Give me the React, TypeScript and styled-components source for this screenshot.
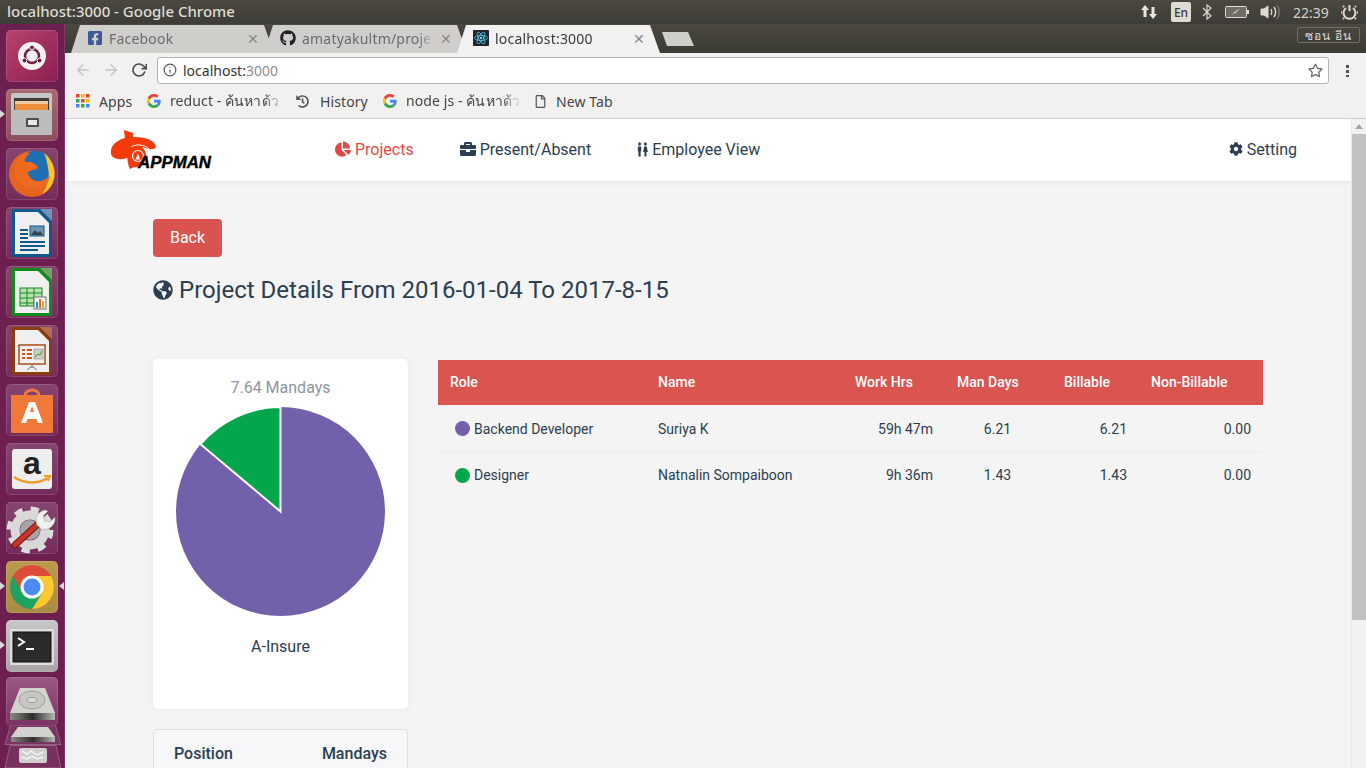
import React from 'react';
import styled, { createGlobalStyle } from 'styled-components';
import { FaBriefcase, FaChartPie, FaCog, FaFacebookSquare, FaGithub, FaGlobeAmericas, FaRegStar, FaRegFile, FaHistory } from 'react-icons/fa';
import { FiArrowLeft, FiArrowRight, FiRotateCw, FiInfo } from 'react-icons/fi';

const GlobalStyle = createGlobalStyle`
  html, body { margin: 0; padding: 0; height: 768px; overflow: hidden; background: #3c3b37; }
  * { box-sizing: border-box; }
`;

const Desktop = styled.div`
  width: 1366px;
  height: 768px;
  display: flex;
  flex-direction: column;
  overflow: hidden;
  font-family: Roboto, sans-serif;
`;

const TopBar = styled.div`
  height: 24px;
  flex: none;
  display: flex;
  align-items: center;
  justify-content: space-between;
  padding: 0 8px 2px 7px;
  background: linear-gradient(#4a4840, #3d3c36);
  color: #dfdbd2;
  font: 500 15px 'Noto Sans', sans-serif;
`;

const Indicators = styled.div`
  display: flex;
  align-items: center;
  margin-bottom: -2px;
`;

const Indicator = styled.div<{ $w: number }>`
  width: ${p => p.$w}px;
  display: flex;
  justify-content: center;
`;

const LangBox = styled.div`
  width: 20px;
  height: 20px;
  margin: 0 8px 0 11px;
  border-radius: 2px;
  background: #dfdbd2;
  color: #3c3b37;
  font: 500 12px 'Noto Sans', sans-serif;
  display: flex;
  align-items: center;
  justify-content: center;
`;

const Clock = styled.div`
  width: 58px;
  text-align: center;
  font: 400 14px 'Noto Sans', sans-serif;
  color: #d5d2c8;
`;

const Body = styled.div`
  flex: 1;
  display: flex;
  min-height: 0;
`;

const Launcher = styled.div`
  width: 65px;
  flex: none;
  display: flex;
  flex-direction: column;
  gap: 7px;
  padding: 6px 0 0 6px;
  background: #6d1f50;
  border-right: 1px solid #7e3a65;
  overflow: hidden;
  position: relative;
`;

const Tile = styled.div<{ $bg?: string; $short?: boolean }>`
  width: 52px;
  height: ${p => (p.$short ? 49 : 52)}px;
  margin-top: ${p => (p.$short ? -2 : 0)}px;
  flex: none;
  position: relative;
  border-radius: 5px;
  background: ${p => p.$bg || 'linear-gradient(#85456f, #752c5c)'};
  box-shadow: inset 0 0 0 1px rgba(255, 255, 255, 0.12);

  svg { display: block; }
`;

const Pip = styled.span<{ $side?: 'left' | 'right' }>`
  position: absolute;
  top: 21px;
  ${p => (p.$side === 'right' ? 'right: -6px;' : 'left: -6px;')}
  width: 0;
  height: 0;
  border-top: 4px solid transparent;
  border-bottom: 4px solid transparent;
  ${p => (p.$side === 'right' ? 'border-right: 5px solid #d8d8d8;' : 'border-left: 5px solid #d8d8d8;')}
`;

const FoldedTile = styled.svg<{ $mt: number }>`
  display: block;
  flex: none;
  margin: ${p => p.$mt}px 0 0 -2px;
`;

const Browser = styled.div`
  flex: 1;
  min-width: 0;
  display: flex;
  flex-direction: column;
`;

const TabStrip = styled.div`
  height: 29px;
  flex: none;
  display: flex;
  align-items: flex-end;
  padding-left: 6px;
  background: linear-gradient(#4a4840, #3b3a33);
  position: relative;
`;

const Tab = styled.div<{ $active?: boolean }>`
  width: 203px;
  height: 28px;
  margin-right: -10px;
  padding: 0 15px 2px 16px;
  flex: none;
  display: flex;
  align-items: center;
  gap: 6px;
  clip-path: polygon(0 100%, 9px 0, calc(100% - 10px) 0, 100% 100%);
  background: ${p => (p.$active ? '#f2f1f0' : '#cfcecb')};
  color: ${p => (p.$active ? '#3a3a3a' : '#6b6b6b')};
  font: 400 14px 'Noto Sans', sans-serif;
  letter-spacing: 0.2px;
  position: relative;
  z-index: ${p => (p.$active ? 2 : 1)};
`;

const TabTitle = styled.span`
  flex: 1;
  overflow: hidden;
  white-space: nowrap;
  -webkit-mask-image: linear-gradient(to right, #000 88%, transparent);
`;

const TabClose = styled.span`
  color: #8a8a8a;
  font-size: 14px;
`;

const NewTab = styled.div`
  width: 32px;
  height: 14px;
  margin: 0 0 7px 12px;
  background: #cfcecb;
  clip-path: polygon(0 0, 26px 0, 100% 100%, 5px 100%);
`;

const HideButton = styled.div`
  position: absolute;
  right: 6px;
  top: 3px;
  width: 63px;
  height: 16px;
  border: 1px solid #706e66;
  border-radius: 2px;
  color: #dfdbd2;
  font: 400 12px 'Noto Sans', sans-serif;
  letter-spacing: 1px;
  display: flex;
  align-items: center;
  justify-content: center;
`;

const Toolbar = styled.div`
  height: 34px;
  flex: none;
  display: flex;
  align-items: center;
  background: #f2f1f0;
  padding: 0 0 0 9px;
  gap: 10px;
`;

const NavButton = styled.span<{ $dim?: boolean }>`
  width: 18px;
  display: flex;
  justify-content: center;
  color: ${p => (p.$dim ? '#c4c4c4' : '#4a4a4a')};
`;

const Omnibox = styled.div`
  width: 1172px;
  height: 27px;
  margin-left: -1px;
  padding: 0 5px 0 5px;
  display: flex;
  align-items: center;
  gap: 6px;
  background: #fff;
  border: 1px solid #b4b4b2;
  border-radius: 3px;
  font: 400 14px 'Noto Sans', sans-serif;
  color: #333;
`;

const Port = styled.span`
  color: #8e8e8e;
  margin-left: -6px;
  flex: 1;
`;

const MenuDots = styled.div`
  width: 3px;
  height: 13px;
  margin-left: 7px;
  background: radial-gradient(circle at center, #555 1.5px, transparent 2px) 0 0 / 3px 5px repeat-y;
`;

const BookmarkBar = styled.div`
  height: 32px;
  flex: none;
  display: flex;
  align-items: center;
  padding: 0 0 3px 11px;
  background: #f2f1f0;
  border-bottom: 1px solid #d0d0ce;
  font: 400 14px 'Noto Sans', sans-serif;
  letter-spacing: 0.1px;
  color: #444;
`;

const Bookmark = styled.div<{ $w: number; $gap?: number; $fade?: boolean }>`
  width: ${p => p.$w}px;
  flex: none;
  display: flex;
  align-items: center;
  gap: ${p => p.$gap || 9}px;
  white-space: nowrap;
  overflow: hidden;
  ${p => (p.$fade ? '-webkit-mask-image: linear-gradient(to right, #000 78%, transparent 92%);' : '')}
`;

const Viewport = styled.div`
  flex: 1;
  min-height: 0;
  display: flex;
`;

const Page = styled.div`
  flex: 1;
  min-width: 0;
  background: #f4f4f4;
  color: #2c3e50;
  overflow: hidden;
`;

const NavBar = styled.div`
  height: 62px;
  display: flex;
  align-items: center;
  background: #fff;
  box-shadow: 0 1px 6px rgba(0, 0, 0, 0.07);
  padding: 0 54px 0 46px;
  font-size: 16px;
`;

const Menu = styled.div`
  display: flex;
  gap: 46px;
  margin-left: 122px;
  flex: 1;
`;

const MenuItem = styled.div<{ $active?: boolean }>`
  display: flex;
  align-items: center;
  gap: 4px;
  padding-bottom: 2px;
  color: ${p => (p.$active ? '#e04a46' : '#2c3e50')};
`;

const Content = styled.div`
  padding: 38px 88px 0 88px;
`;

const BackButton = styled.button`
  width: 69px;
  height: 38px;
  display: block;
  padding: 0 0 2px;
  border: none;
  border-radius: 4px;
  background: #d9534f;
  color: #fff;
  font: 400 16px Roboto, sans-serif;
`;

const Heading = styled.h2`
  margin: 18px 0 0;
  display: flex;
  align-items: center;
  gap: 6px;
  height: 30px;
  font: 400 24px Roboto, sans-serif;
  color: #2c3e50;
`;

const Columns = styled.div`
  margin-top: 54px;
  display: flex;
  gap: 30px;
  align-items: flex-start;
`;

const SideColumn = styled.div`
  width: 255px;
  flex: none;
  display: flex;
  flex-direction: column;
  gap: 20px;
`;

const ChartCard = styled.div`
  height: 350px;
  padding-top: 19px;
  background: #fff;
  border-radius: 5px;
  box-shadow: 0 0 8px rgba(0, 0, 0, 0.05);
  display: flex;
  flex-direction: column;
  align-items: center;
`;

const ChartTitle = styled.div`
  height: 19px;
  font-size: 16px;
  line-height: 19px;
  color: #8d96a0;
`;

const Pie = styled.svg`
  display: block;
  margin-top: 10px;
`;

const ChartLabel = styled.div`
  margin-top: 21px;
  font-size: 16px;
  line-height: 19px;
  color: #2c3e50;
`;

const PositionCard = styled.div`
  height: 120px;
  padding: 14px 20px 0 20px;
  display: flex;
  justify-content: space-between;
  background: #f7f7fa;
  border: 1px solid #dfe0e4;
  border-radius: 4px;
  font-size: 16px;
  font-weight: 500;
  line-height: 19px;
  color: #2c3e50;
`;

const DetailTable = styled.table`
  width: 825px;
  margin-top: 1px;
  table-layout: fixed;
  border-collapse: collapse;
  font-size: 14px;
`;

const HeadRow = styled.tr`
  height: 45px;
  background: #da5450;
  color: #fff;
`;

const Th = styled.th`
  padding: 0 12px 2px;
  text-align: left;
  font-weight: 500;
`;

const Row = styled.tr`
  height: 47px;
  border-bottom: 1px solid #ececec;

  &:last-child {
    height: 45px;
    border-bottom: none;
  }
`;

const Td = styled.td<{ $align?: string }>`
  padding: 1px ${p => (p.$align === 'center' ? '14px' : '12px')} 0 12px;
  text-align: ${p => p.$align || 'left'};
  color: #2c3e50;
`;

const RoleCell = styled.div`
  display: flex;
  align-items: center;
  gap: 4px;
  padding-left: 5px;
`;

const Dot = styled.span<{ $color: string }>`
  width: 15px;
  height: 15px;
  border-radius: 50%;
  background: ${p => p.$color};
`;

const ScrollBar = styled.div`
  width: 15px;
  flex: none;
  display: flex;
  flex-direction: column;
  align-items: center;
  background: #f1f1f1;
  border-left: 1px solid #e8e8e8;
`;

const ScrollArrow = styled.span`
  margin-top: 5px;
  width: 0;
  height: 0;
  border-left: 4px solid transparent;
  border-right: 4px solid transparent;
  border-bottom: 5px solid #a3a3a3;
`;

const ScrollThumb = styled.div`
  width: 100%;
  height: 486px;
  margin-top: 5px;
  background: #c1c1c1;
`;

const GoogleG = () => (
  <svg width="14" height="14" viewBox="0 0 48 48">
    <path fill="#ea4335" d="M24 9.5c3.5 0 6.7 1.3 9.1 3.5l6.8-6.8C35.8 2.4 30.2 0 24 0 14.6 0 6.5 5.4 2.6 13.2l7.9 6.2C12.4 13.6 17.7 9.5 24 9.5z" />
    <path fill="#4285f4" d="M47 24.5c0-1.6-.1-3.1-.4-4.5H24v9h12.9c-.6 3-2.2 5.5-4.7 7.2l7.6 5.9C44.3 37.9 47 31.8 47 24.5z" />
    <path fill="#fbbc05" d="M10.5 28.6c-.5-1.4-.8-3-.8-4.6s.3-3.2.8-4.6l-7.9-6.2C.9 16.5 0 20.1 0 24s.9 7.5 2.6 10.8l7.9-6.2z" />
    <path fill="#34a853" d="M24 48c6.5 0 11.9-2.1 15.8-5.8l-7.6-5.9c-2.1 1.4-4.9 2.3-8.2 2.3-6.3 0-11.6-4.1-13.5-9.9l-7.9 6.2C6.5 42.6 14.6 48 24 48z" />
  </svg>
);

const AppsGrid = () => (
  <svg width="14" height="14" viewBox="0 0 14 14">
    {['#ea4335', '#fbbc05', '#ea4335', '#34a853', '#ea4335', '#fbbc05', '#4285f4', '#34a853', '#4285f4'].map((c, i) => (
      <rect key={i} x={(i % 3) * 5} y={Math.floor(i / 3) * 5} width="3.5" height="3.5" fill={c} />
    ))}
  </svg>
);

const ReactFavicon = () => (
  <svg width="16" height="16" viewBox="0 0 16 16">
    <rect width="16" height="16" rx="1" fill="#20232a" />
    <g fill="none" stroke="#61dafb" strokeWidth="0.7">
      <ellipse cx="8" cy="8" rx="6.5" ry="2.5" />
      <ellipse cx="8" cy="8" rx="6.5" ry="2.5" transform="rotate(60 8 8)" />
      <ellipse cx="8" cy="8" rx="6.5" ry="2.5" transform="rotate(120 8 8)" />
    </g>
    <circle cx="8" cy="8" r="1.3" fill="#61dafb" />
  </svg>
);

const PeopleIcon = () => (
  <svg width="11" height="15" viewBox="0 0 13 15" preserveAspectRatio="none" fill="#2c3e50">
    <circle cx="3" cy="2" r="1.7" />
    <path d="M1 4.5h4v5H4.3v5H1.7v-5H1z" />
    <circle cx="10" cy="2" r="1.7" />
    <path d="M8.5 4.5h3l1.3 5.5h-1.6v4.500H8.8V10H7.2z" />
  </svg>
);

const Logo = () => (
  <svg width="102" height="42" viewBox="0 0 102 42">
    <path fill="#f53b0c" d="M13 1l9 3v6h-8z" />
    <path fill="#f53b0c" d="M0 23C0 14 10 8 23 8c11 0 20 3 22 9 0 4-6 4-11 2-4-2-8-1-11 1-2 5-6 10-11 10-7 1-13-2-12-7z" />
    <path fill="#f53b0c" d="M16 18l7-3c8 0 13 7 12 14-1 7-8 10-12 9l-4 2c-3-6-3-14-3-22z" />
    <path d="M20 18c5-3 13-3 18 2" fill="none" stroke="#fff" strokeWidth="1" />
    <circle cx="27" cy="27" r="5.5" fill="none" stroke="#fff" strokeWidth="1.2" />
    <path fill="#fff" d="M24.500 30.500l2.500-6 2 6z" />
    <text x="27" y="39" fontFamily="'Liberation Sans', sans-serif" fontSize="17" fontWeight="700" fontStyle="italic" textLength="73" lengthAdjust="spacingAndGlyphs" stroke="#000" strokeWidth="0.4" fill="#000">APPMAN</text>
  </svg>
);

const Icon = ({ children }: { children: React.ReactNode }) => (
  <svg width="52" height="52" viewBox="0 0 52 52">{children}</svg>
);

const Doc = ({ border, corner, children }: { border: string; corner: string; children: React.ReactNode }) => (
  <Icon>
    <path fill={border} d="M6 2h28l12 12v34a2 2 0 0 1-2 2H8a2 2 0 0 1-2-2z" />
    <path fill={corner} d="M34 2h12v12z" opacity="0.8" />
    <path fill="#efefef" d="M9 5h23l11 11v31H9z" />
    {children}
  </Icon>
);

const Launchers = () => (
  <Launcher>
    <Tile $bg="linear-gradient(135deg, #b8426f, #8b1f50)">
      <Icon>
        <circle cx="26" cy="26" r="14" fill="#f5f1f3" />
        <circle cx="26" cy="26" r="7" fill="none" stroke="#6d1f44" strokeWidth="2.6" />
        <circle cx="26" cy="17.5" r="2.4" fill="#6d1f44" stroke="#f5f1f3" />
        <circle cx="18.5" cy="30.5" r="2.4" fill="#6d1f44" stroke="#f5f1f3" />
        <circle cx="33.5" cy="30.5" r="2.4" fill="#6d1f44" stroke="#f5f1f3" />
      </Icon>
    </Tile>
    <Tile $bg="linear-gradient(#a86a72, #8d4e60)">
      <Pip />
      <Icon>
        <rect x="5" y="4" width="41" height="42" rx="2" fill="#c4c4c2" />
        <rect x="8" y="9" width="35" height="12" fill="#3b3b3b" />
        <rect x="9" y="12" width="33" height="3" fill="#f0c9a0" />
        <rect x="9" y="15" width="33" height="6" fill="#ef8f3c" />
        <rect x="5" y="21" width="41" height="25" rx="1" fill="#bcbcba" />
        <rect x="20" y="29" width="13" height="9" rx="1" fill="#4d4d4d" />
        <rect x="22" y="31" width="9" height="5" fill="#e7e7e7" />
      </Icon>
    </Tile>
    <Tile>
      <Icon>
        <circle cx="26" cy="26" r="23" fill="#e8641e" />
        <circle cx="29" cy="21" r="18" fill="#1f6fb5" />
        <path fill="#fdc52c" d="M38 5c10 7 13 21 8 31-2 4-6 8-10 10 6-8 8-18 6-26-1-6-2-11-4-15z" />
        <path fill="#ee6a1f" d="M13 9c4-4 9-5 11-4-4 3-6 7-5 9 3-1 8 0 11 3 3 2 1 5-3 5l-5 2c0 6 6 10 13 9 4-1 8-4 9-6-1 8-8 14-16 14-10 0-18-7-19-16 0-7 1-11 4-16z" />
      </Icon>
    </Tile>
    <Tile>
      <Doc border="#0f5a8c" corner="#69a7cf">
        <g fill="#0f5a8c">
          <rect x="14" y="22" width="8" height="2" /><rect x="14" y="26" width="8" height="2" /><rect x="14" y="30" width="8" height="2" />
          <rect x="14" y="34" width="25" height="2" /><rect x="14" y="38" width="25" height="2" /><rect x="14" y="42" width="18" height="2" />
        </g>
        <rect x="24" y="19" width="14" height="10" fill="#6f94b0" stroke="#0f5a8c" />
        <path fill="#33424d" d="M25 28l4-5 3 3 2-2 3 4z" />
      </Doc>
    </Tile>
    <Tile>
      <Doc border="#128c1e" corner="#66bf66">
        <g fill="none" stroke="#128c1e">
          <rect x="14" y="22" width="22" height="18" fill="#b8e3b0" />
          <path d="M14 27h22M14 32h22M14 37h22M21 22v18M28 22v18" />
        </g>
        <rect x="28" y="31" width="12" height="12" fill="#f0f0f0" stroke="#777" />
        <rect x="30" y="36" width="2" height="6" fill="#3a87c8" />
        <rect x="33" y="33" width="2" height="9" fill="#e0702a" />
        <rect x="36" y="35" width="2" height="7" fill="#e0b02a" />
      </Doc>
    </Tile>
    <Tile>
      <Doc border="#8c3d10" corner="#bd7a4a">
        <rect x="13" y="20" width="26" height="19" fill="#f0f0f0" stroke="#a94e1a" strokeWidth="1.5" />
        <g fill="#c8571b">
          <rect x="16" y="24" width="3" height="2" /><rect x="16" y="28" width="3" height="2" /><rect x="16" y="32" width="3" height="2" />
          <rect x="21" y="24" width="5" height="2" /><rect x="21" y="28" width="5" height="2" /><rect x="21" y="32" width="5" height="2" />
        </g>
        <rect x="28" y="24" width="9" height="10" fill="#c6cfc0" stroke="#777" strokeWidth="0.5" />
        <path d="M29 32l3-3 2 1 2-4" stroke="#3a9a3a" fill="none" />
        <path d="M26 39v4M26 41l-5 4M26 41l5 4" stroke="#777" fill="none" />
      </Doc>
    </Tile>
    <Tile>
      <Icon>
        <path d="M19 12c0-8 14-8 14 0" fill="none" stroke="#f07a3e" strokeWidth="3" />
        <path fill="#f0793a" d="M5 11h42v37a1 1 0 0 1-1 1H6a1 1 0 0 1-1-1z" />
        <path fill="#fff" d="M23 18h6l8 21h-5l-1.5-4h-9L20 39h-5zm1 10h4l-2-6z" />
      </Icon>
    </Tile>
    <Tile>
      <Icon>
        <rect x="6" y="6" width="40" height="40" rx="3" fill="#eeeeee" />
        <text x="26" y="31" textAnchor="middle" fontFamily="'Liberation Sans', sans-serif" fontWeight="700" fontSize="32" fill="#222">a</text>
        <path d="M8 34c10 7 24 7 34 1" fill="none" stroke="#f09a22" strokeWidth="2.5" />
        <path d="M38 33l6 0-2 5" fill="none" stroke="#f09a22" strokeWidth="2" />
      </Icon>
    </Tile>
    <Tile>
      <Icon>
        <circle cx="24" cy="28" r="21" fill="none" stroke="#dcdcdc" strokeWidth="5" strokeDasharray="8.25 8.25" />
        <circle cx="24" cy="28" r="15" fill="none" stroke="#d8d8d8" strokeWidth="9" />
        <circle cx="24" cy="28" r="10" fill="#a5a5a5" />
        <path d="M9 43l24-22" stroke="#7d1a14" strokeWidth="7" strokeLinecap="round" />
        <path d="M9 43l24-22" stroke="#c8342a" strokeWidth="4.5" strokeLinecap="round" />
        <path d="M31 23c-3-6 1-14 8-15l3 1-5 5 2 5 5 1 5-5c1 8-6 14-14 12z" fill="#f1f1f1" stroke="#999" strokeWidth="0.5" />
      </Icon>
    </Tile>
    <Tile $bg="linear-gradient(#bb9b4e, #a98b44)">
      <Pip />
      <Pip $side="right" />
      <Icon>
        <circle cx="26" cy="26" r="22" fill="#dd4b39" />
        <path fill="#fdc82f" d="M26 15h19a22 22 0 0 1-19 33l10-16z" />
        <path fill="#1da462" d="M7 15a22 22 0 0 0 19 33l10-16-10 4-10-5z" />
        <circle cx="26" cy="26" r="11.5" fill="#fff" />
        <circle cx="26" cy="26" r="8.5" fill="#4c8bf5" />
      </Icon>
    </Tile>
    <Tile $bg="linear-gradient(#c8c6c8, #a8a4a8)">
      <Pip />
      <Icon>
        <rect x="4" y="9" width="44" height="36" rx="1" fill="#dedede" />
        <rect x="7" y="12" width="38" height="30" fill="#2b2b2b" stroke="#111" />
        <path d="M12 18l6 4-6 4" fill="none" stroke="#fff" strokeWidth="2" />
        <rect x="20" y="28" width="8" height="2" fill="#fff" />
      </Icon>
    </Tile>
    <Tile $short $bg="linear-gradient(#9a5a84, #7a3262)">
      <svg width="52" height="49" viewBox="0 0 52 49">
        <defs>
          <linearGradient id="diskBand">
            <stop offset="0" stopColor="#8a8a86" />
            <stop offset="0.5" stopColor="#2e2e2e" />
            <stop offset="1" stopColor="#b5b5b1" />
          </linearGradient>
        </defs>
        <path fill="#d2d2ce" d="M14 11h25l10 25H4z" />
        <ellipse cx="26" cy="23" rx="13" ry="9" fill="#c6c6c2" stroke="#a0a09c" />
        <ellipse cx="26" cy="23" rx="5" ry="2.5" fill="#d8d8d4" stroke="#a0a09c" />
        <rect x="4" y="36" width="45" height="7" fill="url(#diskBand)" />
      </svg>
    </Tile>
    <FoldedTile $mt={-10} width="58" height="22" viewBox="0 0 58 22">
      <path fill="rgba(255,255,255,0.1)" stroke="rgba(255,255,255,0.25)" d="M7 0.5h44l6 21H1z" />
      <path fill="#d2d2ce" d="M14 4h30l7 10H7z" />
      <rect x="7" y="14" width="44" height="5" fill="url(#diskBand)" />
    </FoldedTile>
    <FoldedTile $mt={-7} width="58" height="23" viewBox="0 0 58 23">
      <path fill="rgba(255,255,255,0.08)" stroke="rgba(255,255,255,0.25)" d="M6 0.5h46l5 22.5H1z" />
      <rect x="15" y="3" width="28" height="15" rx="2" fill="#cfcfcd" />
      <path d="M18 6l5 3 4-3 6 4 6-3M17 12l6 2 5-3 5 3 6-2" stroke="#f4f4f2" strokeWidth="1.5" fill="none" />
    </FoldedTile>
  </Launcher>
);

const App = () => {
  return (
    <Desktop>
      <GlobalStyle />
      <TopBar>
        <span>localhost:3000 - Google Chrome</span>
        <Indicators>
          <Indicator $w={22}>
            <svg width="18" height="18" viewBox="0 0 18 18" fill="#e8e6df">
              <path d="M5 2l4 5H6.5v7h-3V7H1zM13 16l-4-5h2.5V4h3v7H17z" />
            </svg>
          </Indicator>
          <LangBox>En</LangBox>
          <Indicator $w={16}>
            <svg width="12" height="16" viewBox="0 0 12 16" fill="none" stroke="#dfdbd2" strokeWidth="1.2">
              <path d="M2 4l8 8-4 3V1l4 3-8 8" />
            </svg>
          </Indicator>
          <Indicator $w={43}>
            <svg width="24" height="12" viewBox="0 0 24 12">
              <rect x="0.5" y="0.5" width="21" height="11" rx="1" fill="#6e6c64" stroke="#dfdbd2" />
              <rect x="22" y="4" width="2" height="4" fill="#dfdbd2" />
              <path d="M6 9l6-3-1 0 4-3-5 2 1 0z" fill="#dfdbd2" />
            </svg>
          </Indicator>
          <Indicator $w={24}>
            <svg width="20" height="16" viewBox="0 0 20 16" fill="none" stroke="#dfdbd2">
              <path d="M1 5h3l4-3v12l-4-3H1z" fill="#dfdbd2" />
              <path d="M11 5c1 2 1 4 0 6M14 3c2 3 2 7 0 10" strokeWidth="1.4" />
              <path d="M17 1c3 4 3 10 0 14" stroke="#84827a" strokeWidth="1.2" />
            </svg>
          </Indicator>
          <Clock>22:39</Clock>
          <Indicator $w={18}>
            <svg width="17" height="17" viewBox="0 0 17 17" fill="none" stroke="#dfdbd2" strokeWidth="2">
              <path d="M8.5 1v6" />
              <path d="M5 4a6 6 0 1 0 7 0" />
              <path d="M1 8.5H0M17 8.5h-1M3 3L2 2M14 3l1-1M3 14l-1 1M14 14l1 1" />
            </svg>
          </Indicator>
        </Indicators>
      </TopBar>
      <Body>
        <Launchers />
        <Browser>
          <TabStrip>
            <Tab>
              <FaFacebookSquare size={16} color="#3b5998" />
              <TabTitle>Facebook</TabTitle>
              <TabClose>✕</TabClose>
            </Tab>
            <Tab>
              <FaGithub size={16} color="#222" />
              <TabTitle>amatyakultm/proje</TabTitle>
              <TabClose>✕</TabClose>
            </Tab>
            <Tab $active>
              <ReactFavicon />
              <TabTitle>localhost:3000</TabTitle>
              <TabClose>✕</TabClose>
            </Tab>
            <NewTab />
            <HideButton>ซอน อีน</HideButton>
          </TabStrip>
          <Toolbar>
            <NavButton $dim><FiArrowLeft size={18} /></NavButton>
            <NavButton $dim><FiArrowRight size={18} /></NavButton>
            <NavButton><FiRotateCw size={16} strokeWidth={2.5} /></NavButton>
            <Omnibox>
              <FiInfo size={14} color="#555" />
              <span>localhost:</span>
              <Port>3000</Port>
              <FaRegStar size={15} color="#666" />
            </Omnibox>
            <MenuDots />
          </Toolbar>
          <BookmarkBar>
            <Bookmark $w={71}><AppsGrid /><span>Apps</span></Bookmark>
            <Bookmark $w={149} $fade><GoogleG /><span>reduct - ค้นหาด้ว</span></Bookmark>
            <Bookmark $w={87} $gap={11}><FaHistory size={13} color="#555" /><span>History</span></Bookmark>
            <Bookmark $w={151} $fade><GoogleG /><span>node js - ค้นหาด้ว</span></Bookmark>
            <Bookmark $w={90}><FaRegFile size={13} color="#555" /><span>New Tab</span></Bookmark>
          </BookmarkBar>
          <Viewport>
            <Page>
              <NavBar>
                <Logo />
                <Menu>
                  <MenuItem $active><FaChartPie size={16} />Projects</MenuItem>
                  <MenuItem><FaBriefcase size={16} />Present/Absent</MenuItem>
                  <MenuItem><PeopleIcon />Employee View</MenuItem>
                </Menu>
                <MenuItem><FaCog size={14} />Setting</MenuItem>
              </NavBar>
              <Content>
                <BackButton>Back</BackButton>
                <Heading><FaGlobeAmericas size={20} />Project Details From 2016-01-04 To 2017-8-15</Heading>
                <Columns>
                  <SideColumn>
                    <ChartCard>
                      <ChartTitle>7.64 Mandays</ChartTitle>
                      <Pie width="209" height="209" viewBox="0 0 209 209">
                        <circle cx="104.5" cy="104.5" r="104.5" fill="#7360ab" />
                        <path d="M104.5 104.5L104.5 0A104.5 104.5 0 0 0 24.5 37.2z" fill="#03a64a" stroke="#fff" strokeWidth="2" />
                      </Pie>
                      <ChartLabel>A-Insure</ChartLabel>
                    </ChartCard>
                    <PositionCard>
                      <span>Position</span>
                      <span>Mandays</span>
                    </PositionCard>
                  </SideColumn>
                  <DetailTable>
                    <colgroup>
                      <col width="208" />
                      <col width="197" />
                      <col width="102" />
                      <col width="107" />
                      <col width="87" />
                      <col width="124" />
                    </colgroup>
                    <thead>
                      <HeadRow>
                        <Th>Role</Th>
                        <Th>Name</Th>
                        <Th>Work Hrs</Th>
                        <Th>Man Days</Th>
                        <Th>Billable</Th>
                        <Th>Non-Billable</Th>
                      </HeadRow>
                    </thead>
                    <tbody>
                      <Row>
                        <Td><RoleCell><Dot $color="#7360ab" />Backend Developer</RoleCell></Td>
                        <Td>Suriya K</Td>
                        <Td $align="right">59h 47m</Td>
                        <Td $align="center">6.21</Td>
                        <Td $align="right">6.21</Td>
                        <Td $align="right">0.00</Td>
                      </Row>
                      <Row>
                        <Td><RoleCell><Dot $color="#03a64a" />Designer</RoleCell></Td>
                        <Td>Natnalin Sompaiboon</Td>
                        <Td $align="right">9h 36m</Td>
                        <Td $align="center">1.43</Td>
                        <Td $align="right">1.43</Td>
                        <Td $align="right">0.00</Td>
                      </Row>
                    </tbody>
                  </DetailTable>
                </Columns>
              </Content>
            </Page>
            <ScrollBar>
              <ScrollArrow />
              <ScrollThumb />
            </ScrollBar>
          </Viewport>
        </Browser>
      </Body>
    </Desktop>
  );
};

export default App;
